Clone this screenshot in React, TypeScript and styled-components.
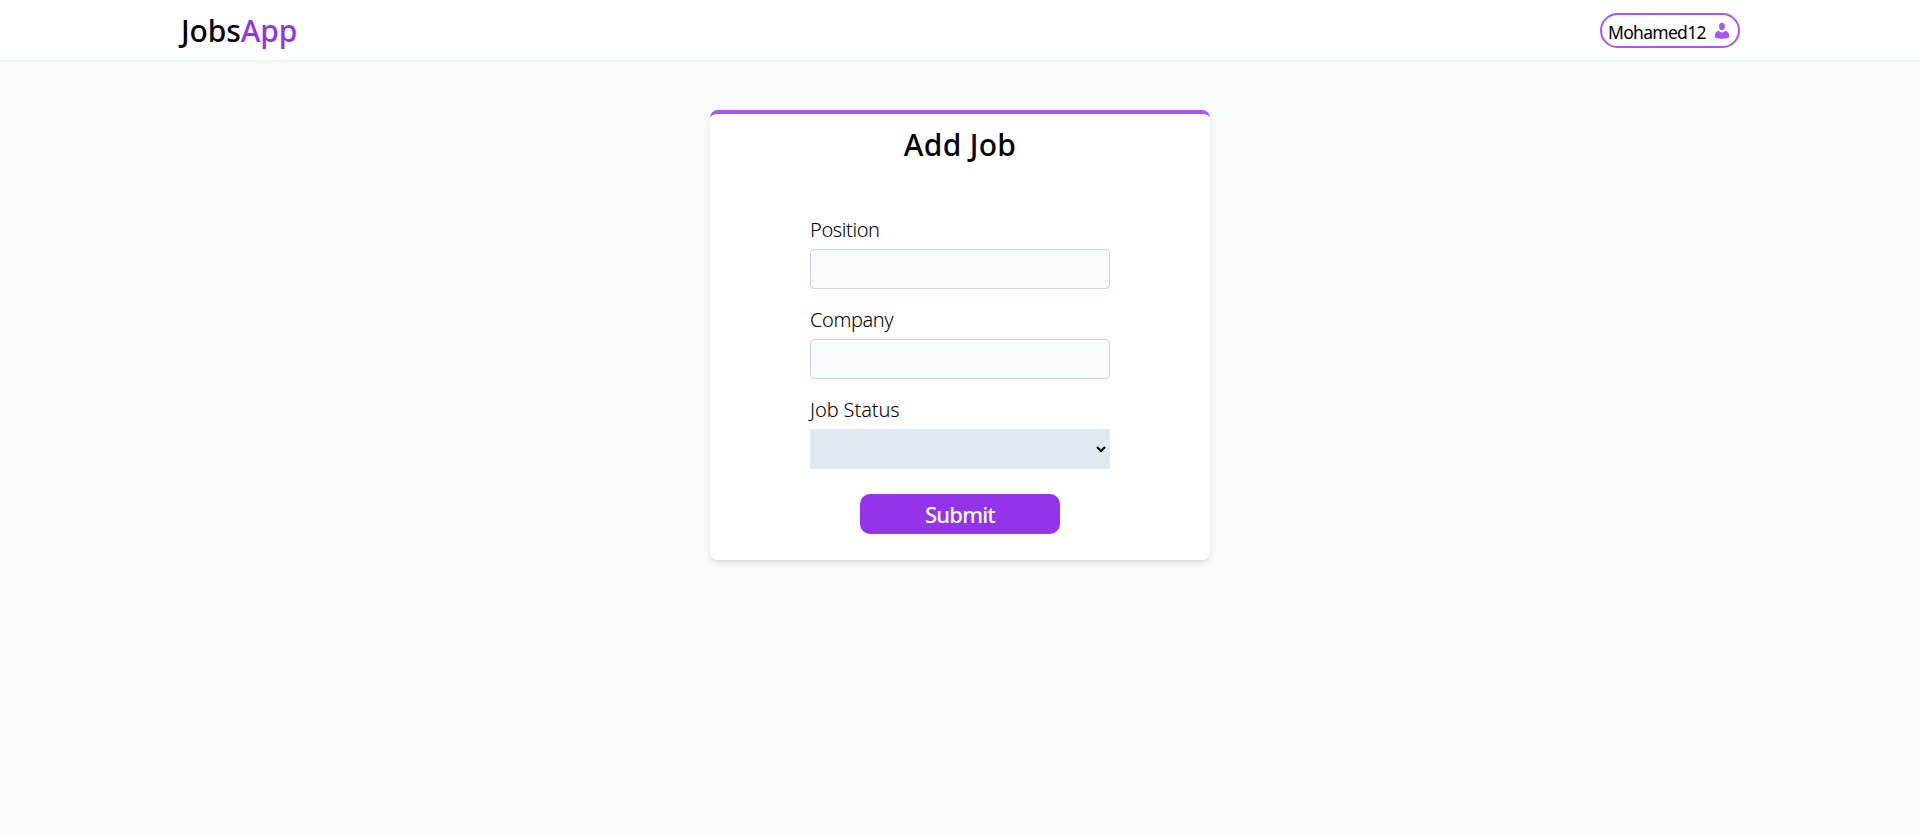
import React from "react";
import styled, { createGlobalStyle } from "styled-components";

const GlobalStyle = createGlobalStyle`
  *, *::before, *::after { box-sizing: border-box; }
  body {
    margin: 0;
    background: #f8fafc;
    color: #000;
    font-family: "Segoe UI", "Noto Sans", "Open Sans", sans-serif;
  }
`;

const Page = styled.div`
  min-height: 100vh;
  background: #f8fafc;
`;

const Header = styled.header`
  height: 60px;
  padding: 0 180px;
  display: flex;
  align-items: center;
  justify-content: space-between;
  background: #fff;
  box-shadow: 0 1px 2px 0 rgba(0, 0, 0, 0.05);
`;

const Logo = styled.div`
  padding: 1px 0 0 1px;
  font-size: 30px;
  line-height: 36px;
  font-weight: 500;
  letter-spacing: -0.1px;
`;

const Accent = styled.span`
  color: #9333ea;
`;

const UserButton = styled.button`
  width: 140px;
  height: 35px;
  margin-top: 1px;
  padding: 0 8px 0 6px;
  display: flex;
  align-items: center;
  justify-content: space-between;
  border: 2px solid #a855f7;
  border-radius: 999px;
  background: #fff;
  color: #000;
  font: 400 17.5px/28px "Segoe UI", "Noto Sans", sans-serif;
  letter-spacing: -0.7px;
`;

const UserName = styled.span`
  padding-top: 2px;
`;

const Main = styled.main`
  display: flex;
  justify-content: center;
  padding-top: 50px;
`;

const Card = styled.form`
  width: 500px;
  height: 450px;
  padding: 12px 100px 0;
  display: flex;
  flex-direction: column;
  background: #fff;
  border-top: 4px solid #a855f7;
  border-radius: 8px;
  box-shadow: 0 4px 6px -1px rgba(0, 0, 0, 0.1), 0 2px 4px -2px rgba(0, 0, 0, 0.1);
`;

const Title = styled.h1`
  margin: 0 0 53px;
  padding-top: 1px;
  font-size: 30px;
  line-height: 36px;
  font-weight: 500;
  letter-spacing: 0.3px;
  text-align: center;
`;

const Field = styled.div`
  height: 90px;
  display: flex;
  flex-direction: column;
`;

const Label = styled.label<{ $tracking: number }>`
  height: 33px;
  line-height: 28px;
  font-size: 20px;
  font-weight: 300;
  letter-spacing: ${(p) => p.$tracking}px;
`;

const Input = styled.input`
  width: 100%;
  height: 40px;
  padding: 0 8px;
  background: #f8fafc;
  border: 1px solid #cbd5e1;
  border-radius: 4px;
  outline: none;
`;

const Select = styled.select`
  width: 100%;
  height: 40px;
  background-color: #e2e8f0;
  border: 0 solid #e2e8f0;
  border-right-width: 1px;
  border-radius: 0;
  font-size: 16px;
  outline: none;
`;

const Submit = styled.button`
  width: 200px;
  height: 40px;
  margin-top: 8px;
  padding: 0;
  align-self: center;
  border: 0;
  border-radius: 10px;
  background: #9333ea;
  color: #fff;
  font: 500 22px/32px "Segoe UI", "Noto Sans", sans-serif;
  letter-spacing: -0.8px;
`;

const UserIcon = () => (
  <svg width="16" height="18" viewBox="0 0 16 18" fill="#a855f7" aria-hidden="true">
    <ellipse cx="8" cy="4.4" rx="2.9" ry="3.7" />
    <path d="M4.6 8.8 Q6.2 10.6 8 10.6 Q9.8 10.6 11.4 8.8 C14 9.3 15.3 11.6 15.3 15.4 Q12 16.8 8 16.8 Q4 16.8.7 15.4 C.7 11.6 2 9.3 4.6 8.8Z" />
  </svg>
);

export default function App() {
  return (
    <Page>
      <GlobalStyle />
      <Header>
        <Logo>
          Jobs<Accent>App</Accent>
        </Logo>
        <UserButton type="button">
          <UserName>Mohamed12</UserName>
          <UserIcon />
        </UserButton>
      </Header>
      <Main>
        <Card>
          <Title>Add Job</Title>
          <Field>
            <Label htmlFor="position" $tracking={-0.4}>Position</Label>
            <Input id="position" />
          </Field>
          <Field>
            <Label htmlFor="company" $tracking={-0.4}>Company</Label>
            <Input id="company" />
          </Field>
          <Field>
            <Label htmlFor="status" $tracking={-0.1}>Job Status</Label>
            <Select id="status" defaultValue="">
              <option value="" />
            </Select>
          </Field>
          <Submit type="button">Submit</Submit>
        </Card>
      </Main>
    </Page>
  );
}
